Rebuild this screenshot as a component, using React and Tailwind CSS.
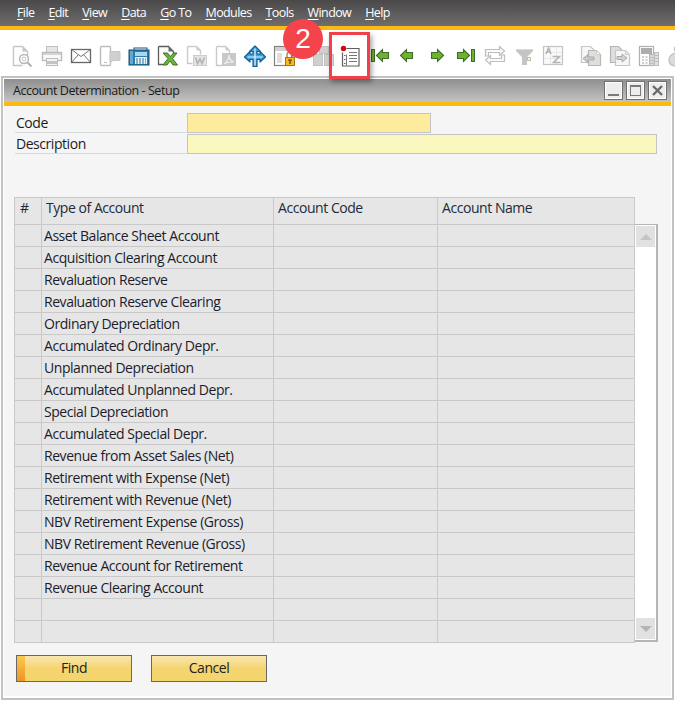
import React from "react";

const menus = [
  ["F", "ile"],
  ["E", "dit"],
  ["V", "iew"],
  ["D", "ata"],
  ["G", "o To"],
  ["M", "odules"],
  ["T", "ools"],
  ["W", "indow"],
  ["H", "elp"],
];

const accounts = [
  "Asset Balance Sheet Account",
  "Acquisition Clearing Account",
  "Revaluation Reserve",
  "Revaluation Reserve Clearing",
  "Ordinary Depreciation",
  "Accumulated Ordinary Depr.",
  "Unplanned Depreciation",
  "Accumulated Unplanned Depr.",
  "Special Depreciation",
  "Accumulated Special Depr.",
  "Revenue from Asset Sales (Net)",
  "Retirement with Expense (Net)",
  "Retirement with Revenue (Net)",
  "NBV Retirement Expense (Gross)",
  "NBV Retirement Revenue (Gross)",
  "Revenue Account for Retirement",
  "Revenue Clearing Account",
  "",
  "",
];

const Svg = ({ children }) => (
  <svg width="24" height="24" viewBox="0 0 24 24" fill="none">
    {children}
  </svg>
);

const PagePreview = () => (
  <Svg>
    <path d="M3.500 1.500h9l5 5v4M3.500 1.500v19h9" stroke="#c6c6c6" strokeWidth="1.400" />
    <path d="M12.500 1.500v5h5z" fill="#c6c6c6" />
    <circle cx="14" cy="14" r="4.500" stroke="#b4b4b4" strokeWidth="1.400" />
    <circle cx="14" cy="14" r="2" stroke="#c4c4c4" />
    <path d="M17.500 17.500l4 4" stroke="#b0b0b0" strokeWidth="2" />
  </Svg>
);
const Printer = () => (
  <Svg>
    <rect x="6.500" y="1.500" width="11" height="7" fill="#e6e6e6" stroke="#c0c0c0" />
    <rect x="2.500" y="7.500" width="19" height="8" fill="#fafafa" stroke="#b8b8b8" strokeWidth="1.300" />
    <rect x="3" y="8" width="18" height="2" fill="#d4d4d4" />
    <rect x="6.500" y="13.500" width="11" height="7" fill="#f4f4f4" stroke="#bcbcbc" />
    <rect x="7" y="16" width="10" height="3" fill="#c4c4c4" />
  </Svg>
);
const Envelope = () => (
  <Svg>
    <rect x="2.500" y="4.500" width="19" height="13" fill="#fff" stroke="#666" strokeWidth="1.300" />
    <path d="M2.500 4.500l9.500 7 9.500-7M2.500 17.500l7-8M21.500 17.500l-7-8" stroke="#777" />
  </Svg>
);
const Devices = () => (
  <Svg>
    <rect x="2.500" y="1.500" width="10" height="19" rx="1" fill="#fff" stroke="#bcbcbc" strokeWidth="1.400" />
    <path d="M6 17.500h3" stroke="#bcbcbc" />
    <path d="M12 6.500h10v9h-7l-3 2z" fill="#d0d0d0" stroke="#c6c6c6" />
  </Svg>
);
const Fax = () => (
  <Svg>
    <rect x="7" y="3" width="13" height="4" fill="#fff" stroke="#1a5578" />
    <rect x="2" y="5" width="20" height="15" fill="#2a7cb0" stroke="#16506f" />
    <rect x="3" y="6" width="3" height="13" fill="#6aa6cc" />
    <rect x="8" y="7" width="12" height="4" fill="#a9d6ee" />
    <rect x="8" y="12" width="12" height="7" fill="#e8f1f6" />
    <path d="M9 14h10M9 16h10M9 18h10" stroke="#2a6f9a" strokeDasharray="2 1" />
  </Svg>
);
const ExcelDoc = () => (
  <Svg>
    <path d="M2.500 1.500h10l5 5v4M2.500 1.500v18h5" stroke="#5c5c5c" strokeWidth="1.300" />
    <path d="M12.500 1.500v5h5z" fill="#6a6a6a" />
    <path d="M7 8h4.500l3 3.500L17.500 8H21l-4.500 5.500L21.500 20h-4.500L14 16l-3 4H7l5-6.500z" fill="#6fb23c" stroke="#2f6b1e" strokeWidth="0.900" />
  </Svg>
);
const WordDoc = () => (
  <Svg>
    <path d="M2.500 1.500h9l4 4v4M2.500 1.500v17h5" stroke="#cacaca" strokeWidth="1.400" />
    <path d="M11.500 1.500v4h4z" fill="#cacaca" />
    <rect x="8.500" y="10.500" width="13" height="10" fill="#e4e4e4" stroke="#c4d4c0" />
    <path d="M10.500 12.500l2 6 2.500-4.500 2 4.500 2.500-6" stroke="#b2b2b2" strokeWidth="1.600" />
  </Svg>
);
const PdfDoc = () => (
  <Svg>
    <path d="M2.500 1.500h9l4 4v3M2.500 1.500v19h6" stroke="#cacaca" strokeWidth="1.400" />
    <path d="M11.500 1.500v4h4z" fill="#cacaca" />
    <rect x="8" y="8" width="14" height="13" fill="#c8c8c8" />
    <path d="M10 19c3-2 5-6 5-9 0 3 2 6 5 7-3 0-7 0-10 2z" stroke="#efefef" strokeWidth="1.200" />
  </Svg>
);
const BlueArrows = () => (
  <Svg>
    <path
      d="M12 1l5.500 5.500H14V9h3V6.500L22.500 12 17 17v-2.500h-3v7h-4v-7H7V17l-5.500-5L7 6.500V9h3V6.500H6.500z"
      fill="#3f9edb"
      stroke="#14608f"
      strokeWidth="1.200"
      strokeLinejoin="round"
    />
    <path d="M12 3.500v17M4.500 12h15" stroke="#e2f3fc" strokeWidth="1.200" />
  </Svg>
);
const WindowLock = () => (
  <Svg>
    <rect x="2.500" y="1.500" width="17" height="19" fill="#fff" stroke="#808080" strokeWidth="1.200" />
    <rect x="3" y="2" width="16" height="4" fill="#d0d0d0" />
    <rect x="5" y="8" width="5" height="10" fill="#dedede" />
    <path d="M15 12V9.500a2.500 2.500 0 0 1 5 0V12" stroke="#8d7744" strokeWidth="1.200" />
    <rect x="13.500" y="12.500" width="9" height="8" fill="#f6b91f" stroke="#a3761d" />
    <path d="M16 15h4M18 15v4" stroke="#4f3a10" strokeWidth="1.200" />
  </Svg>
);
const GrayBlocks = () => (
  <Svg>
    <rect x="7.500" y="1.500" width="9" height="7" fill="#d0d0d0" stroke="#c0c0c0" />
    <rect x="1.500" y="9.500" width="9" height="11" fill="#d0d0d0" stroke="#c0c0c0" />
    <rect x="12.500" y="9.500" width="9" height="11" fill="#d0d0d0" stroke="#c0c0c0" />
  </Svg>
);
const NumberedList = () => (
  <Svg>
    <path d="M7.500 3.500h12.500v17.500H3.500V7.500" fill="#fff" stroke="#5f5f5f" strokeWidth="1.200" />
    <path d="M7.500 9.500v11" stroke="#7a7a7a" />
    <path d="M5 10.500h1.500M5 14.500h1.500M5 18.500h1.500" stroke="#666" />
    <path d="M10 7.500h8M10 10.500h8M10 13.500h8M10 16.500h8" stroke="#777" />
    <circle cx="4.500" cy="3.500" r="2.700" fill="#cc0a14" />
  </Svg>
);

const ArrowLeft = ({ x }) => (
  <path
    transform={`translate(${x} 4)`}
    d="M0.500 6.500L6.500 0.500V3.500H12.500V9.500H6.500V12.500Z"
    fill="#70b12e"
    stroke="#3d6e2a"
    strokeWidth="1.100"
  />
);
const ArrowRight = ({ x }) => (
  <path
    transform={`translate(${x} 4)`}
    d="M12.500 6.500L6.500 0.500V3.500H0.500V9.500H6.500V12.500Z"
    fill="#70b12e"
    stroke="#3d6e2a"
    strokeWidth="1.100"
  />
);
const NavFirst = () => (
  <Svg>
    <rect x="3.500" y="4.500" width="3" height="12" fill="#70b12e" stroke="#3d6e2a" />
    <ArrowLeft x={8} />
  </Svg>
);
const NavPrev = () => (
  <Svg>
    <ArrowLeft x={5} />
  </Svg>
);
const NavNext = () => (
  <Svg>
    <ArrowRight x={5} />
  </Svg>
);
const NavLast = () => (
  <Svg>
    <ArrowRight x={4} />
    <rect x="18.500" y="4.500" width="3" height="12" fill="#70b12e" stroke="#3d6e2a" />
  </Svg>
);
const Exchange = () => (
  <Svg>
    <path d="M2.500 11V4.500h14V1.500l5 4.500-5 4.500V7.500H5.500V11z" fill="#fafafa" stroke="#bdbdbd" strokeWidth="1.200" />
    <path d="M21.500 10v6.500h-14v3l-5-4.500 5-4.500v3h11V10z" fill="#fafafa" stroke="#bdbdbd" strokeWidth="1.200" />
  </Svg>
);
const Funnel = () => (
  <Svg>
    <path d="M3 4h17v2l-6 6v8h-5v-8L3 6z" fill="#c4c4c4" />
    <path d="M3 4.500h17" stroke="#d8d8d8" />
    <rect x="14.500" y="12.500" width="3" height="3" fill="#f4f4f4" stroke="#b6c6a8" />
  </Svg>
);
const Sort = () => (
  <Svg>
    <rect x="2.500" y="1.500" width="19" height="18" fill="#fafafa" stroke="#c4c4c4" strokeWidth="1.200" />
    <path d="M3 7.500h18M3 13.500h18M9.500 2v17M15.500 2v17" stroke="#e8e8e8" />
    <path d="M5 9l2.500-6L10 9M6 7h3M11.500 11.500h7l-6 6h7" stroke="#b4b4b4" strokeWidth="1.600" />
  </Svg>
);
const DocBack = () => (
  <Svg>
    <path d="M2.500 1.500h9l3 3v13h-12z" fill="#f6f6f6" stroke="#c6c6c6" strokeWidth="1.200" />
    <path d="M9.500 5.500h8l4 4v11h-12z" fill="#dedede" stroke="#b8b8b8" strokeWidth="1.200" />
    <path d="M17.500 5.500v4h4z" fill="#f4f4f4" stroke="#c4d4c0" />
    <path d="M4 13.500l5-4v2.500h6v3H9V18z" fill="#c8c8c8" stroke="#aaa" />
  </Svg>
);
const DocFwd = () => (
  <Svg>
    <path d="M2.500 1.500h8l3 3v13h-11z" fill="#dedede" stroke="#b4b4b4" strokeWidth="1.200" />
    <path d="M7.500 5.500h10l4 4v11h-14z" fill="#f6f6f6" stroke="#c6c6c6" strokeWidth="1.200" />
    <path d="M17.500 5.500v4h4z" fill="#e8e8e8" stroke="#c4d4c0" />
    <path d="M19 13l-5-4v2.500H9v3h5V17z" fill="#d0d0d0" stroke="#aaa" />
  </Svg>
);
const Calc = () => (
  <Svg>
    <rect x="2.500" y="1.500" width="14" height="19" fill="#fff" stroke="#b0b0b0" strokeWidth="1.200" />
    <rect x="4" y="3" width="11" height="6" fill="#adadad" />
    <path d="M5 12h2M8.500 12h2M5 15h2M8.500 15h2M5 18h2M8.500 18h2" stroke="#9c9c9c" />
    <rect x="12.500" y="9.500" width="5" height="11" fill="#d8d8d8" stroke="#b8b8b8" />
    <rect x="17.500" y="7.500" width="4" height="13" fill="#e0e0e0" stroke="#bcbcbc" />
    <path d="M13 12.500h4M13 15.500h4M13 18.500h4M18 10.500h3M18 13.500h3M18 16.500h3" stroke="#bdbdbd" />
  </Svg>
);
const Bag = () => (
  <Svg>
    <path d="M2 15a8 7 0 0 1 16 0c0 4-3 6-8 6s-8-2-8-6z" fill="#dcdcdc" stroke="#bfc8ba" strokeWidth="1.500" />
    <circle cx="10" cy="4" r="2.500" stroke="#bfc8ba" strokeWidth="1.500" />
  </Svg>
);

// every icon sits in a 24px box, the margin sets the gap to the one before it
const tools = [
  [PagePreview, "ml-[10px]"],
  [Printer, "ml-[6px]"],
  [Envelope, "ml-[5px]"],
  [Devices, "ml-[5px]"],
  [Fax, "ml-[5px]"],
  [ExcelDoc, "ml-[5px]"],
  [WordDoc, "ml-[5px]"],
  [PdfDoc, "ml-[5px]"],
  [BlueArrows, "ml-[5px]"],
  [WindowLock, "ml-[5px]"],
  [GrayBlocks, "ml-[16px]"],
  [NumberedList, "ml-[3px]"],
  [NavFirst, "ml-[5px]"],
  [NavPrev, "ml-[3px]"],
  [NavNext, "ml-[7px]"],
  [NavLast, "ml-[3px]"],
  [Exchange, "ml-[6px]"],
  [Funnel, "ml-[6px]"],
  [Sort, "ml-[4px]"],
  [DocBack, "ml-[14px]"],
  [DocFwd, "ml-[5px]"],
  [Calc, "ml-[5px]"],
  [Bag, "ml-[6px]"],
];

const WinButton = ({ children }) => (
  <div className="flex h-[19px] w-[19px] items-center justify-center border border-[#707070] bg-[#ededed] shadow-[inset_0_0_0_1px_#fff]">
    {children}
  </div>
);

const FormRow = ({ label, inputClass }) => (
  <div className="flex h-[20px] items-stretch">
    <div className="flex w-[172px] items-center border-b border-[#d5d9de] pl-[1px] text-[14px] leading-none">
      {label}
    </div>
    <div className={`border border-[#c4c4c4] ${inputClass}`} />
  </div>
);

const Row = ({ text }) => (
  <div className="flex h-[22px] border-b border-[#c9c9c9] bg-[#e6e6e6] text-[14px] leading-none text-[#1c1c2c]">
    <div className="w-[27px] border-r border-[#c9c9c9]" />
    <div className="flex w-[232px] items-center border-r border-[#c9c9c9] pl-[2px]">{text}</div>
    <div className="w-[164px] border-r border-[#c9c9c9]" />
    <div className="flex-1" />
  </div>
);

const Head = ({ className, children }) => (
  <div className={`border-r border-[#c9c9c9] pt-[2px] text-[14px] leading-[16px] ${className}`}>
    {children}
  </div>
);

const ActionButton = ({ label, accent }) => (
  <div className="relative flex h-[27px] w-[116px] items-center justify-center border border-[#686868] bg-gradient-to-b from-[#f8e6ae] via-[#f5d56f] to-[#f4d46c] pb-[2px] text-[14px] leading-none text-[#222]">
    {accent && (
      <div className="absolute inset-y-0 left-0 w-[8px] bg-gradient-to-b from-[#fbc94e] to-[#ef9320]" />
    )}
    <span className={accent ? "relative" : ""}>{label}</span>
  </div>
);

export default function App() {
  return (
    <div className="relative h-[701px] w-[675px] overflow-hidden bg-white font-['Open_Sans',sans-serif] tracking-[-0.45px] text-[#1c1c1c]">
      {/* Menu bar */}
      <div className="flex h-[26px] items-center gap-[14px] bg-gradient-to-b from-[#4a4849] to-[#6f6e6f] pl-[17px] text-[12.5px] leading-none tracking-[-0.6px] text-white">
        {menus.map(([key, rest]) => (
          <span key={key + rest}>
            <span className="underline underline-offset-2">{key}</span>
            {rest}
          </span>
        ))}
      </div>
      <div className="h-[4px] bg-[#fdb913]" />

      {/* Toolbar */}
      <div className="flex h-[46px] items-center overflow-hidden pt-[8px]">
        {tools.map(([Icon, margin], i) => (
          <div key={i} className={`h-[24px] w-[24px] shrink-0 ${margin}`}>
            <Icon />
          </div>
        ))}
      </div>

      {/* Window */}
      <div className="ml-[1px] mr-[1px] h-[624px] border-2 border-[#c2c2c2] bg-white px-[1px] pt-[1px]">
        <div className="flex h-[23px] items-center justify-between bg-gradient-to-b from-[#8f8f8f] to-[#c4c4c4] pl-[9px] pr-[4px] text-[12.5px] leading-none text-[#1a1a1a]">
          <span className="pt-[1px]">Account Determination - Setup</span>
          <div className="flex gap-[3px]">
            <WinButton>
              <div className="mt-[9px] h-[2px] w-[11px] bg-[#7a7a7a]" />
            </WinButton>
            <WinButton>
              <div className="h-[11px] w-[11px] border border-t-2 border-[#7a7a7a]" />
            </WinButton>
            <WinButton>
              <svg width="11" height="11" viewBox="0 0 11 11">
                <path d="M1 1l9 9M10 1l-9 9" stroke="#6a6a6a" strokeWidth="2.400" />
              </svg>
            </WinButton>
          </div>
        </div>
        <div className="h-[4px] bg-[#fdb913]" />

        <div className="h-[590px] bg-[#f5f5f5] pl-[10px] pr-[9px] pt-[7px]">
          <div className="flex flex-col gap-[1px] pl-[1px]">
            <FormRow label="Code" inputClass="w-[244px] bg-[#feeb9c]" />
            <FormRow label="Description" inputClass="w-[470px] bg-[#fbf8bf]" />
          </div>

          {/* Grid */}
          <div className="mt-[43px] w-[644px]">
            <div className="flex h-[28px] w-[621px] border border-[#c9c9c9] bg-[#e6e6e6] text-[#222a3a]">
              <Head className="w-[27px] pl-[5px]">#</Head>
              <Head className="w-[232px] pl-[4px]">Type of Account</Head>
              <Head className="w-[164px] pl-[4px]">Account Code</Head>
              <div className="flex-1 pl-[4px] pt-[2px] text-[14px] leading-[16px]">Account Name</div>
            </div>
            <div className="flex">
              <div className="w-[621px] border-x border-[#c9c9c9]">
                {accounts.map((text, i) => (
                  <Row key={i} text={text} />
                ))}
              </div>
              <div className="-mt-[1px] mb-[1px] flex w-[23px] flex-col justify-between border-b-2 border-r-2 border-t border-[#b5b5b5] bg-white p-[1px]">
                <div className="flex h-[21px] items-center justify-center bg-[#e1e1e1]">
                  <div className="h-0 w-0 border-x-[6px] border-b-[6px] border-x-transparent border-b-[#c5c5c5]" />
                </div>
                <div className="flex h-[21px] items-center justify-center bg-[#e1e1e1]">
                  <div className="h-0 w-0 border-x-[6px] border-t-[6px] border-x-transparent border-t-[#b5b5b5]" />
                </div>
              </div>
            </div>
          </div>

          <div className="mt-[12px] flex gap-[19px] pl-[2px]">
            <ActionButton label="Find" accent />
            <ActionButton label="Cancel" />
          </div>
        </div>
      </div>

      {/* Callout over the toolbar */}
      <div className="absolute left-[329px] top-[32px] h-[47px] w-[41px] border-[3px] border-[#f0404a] shadow-[2px_3px_5px_rgba(0,0,0,0.35)]" />
      <div className="absolute left-[283px] top-[19px] flex h-[40px] w-[40px] items-center justify-center rounded-full bg-[#f5434c] font-['Liberation_Sans',sans-serif] text-[28px] leading-none tracking-normal text-white">
        2
      </div>
    </div>
  );
}
